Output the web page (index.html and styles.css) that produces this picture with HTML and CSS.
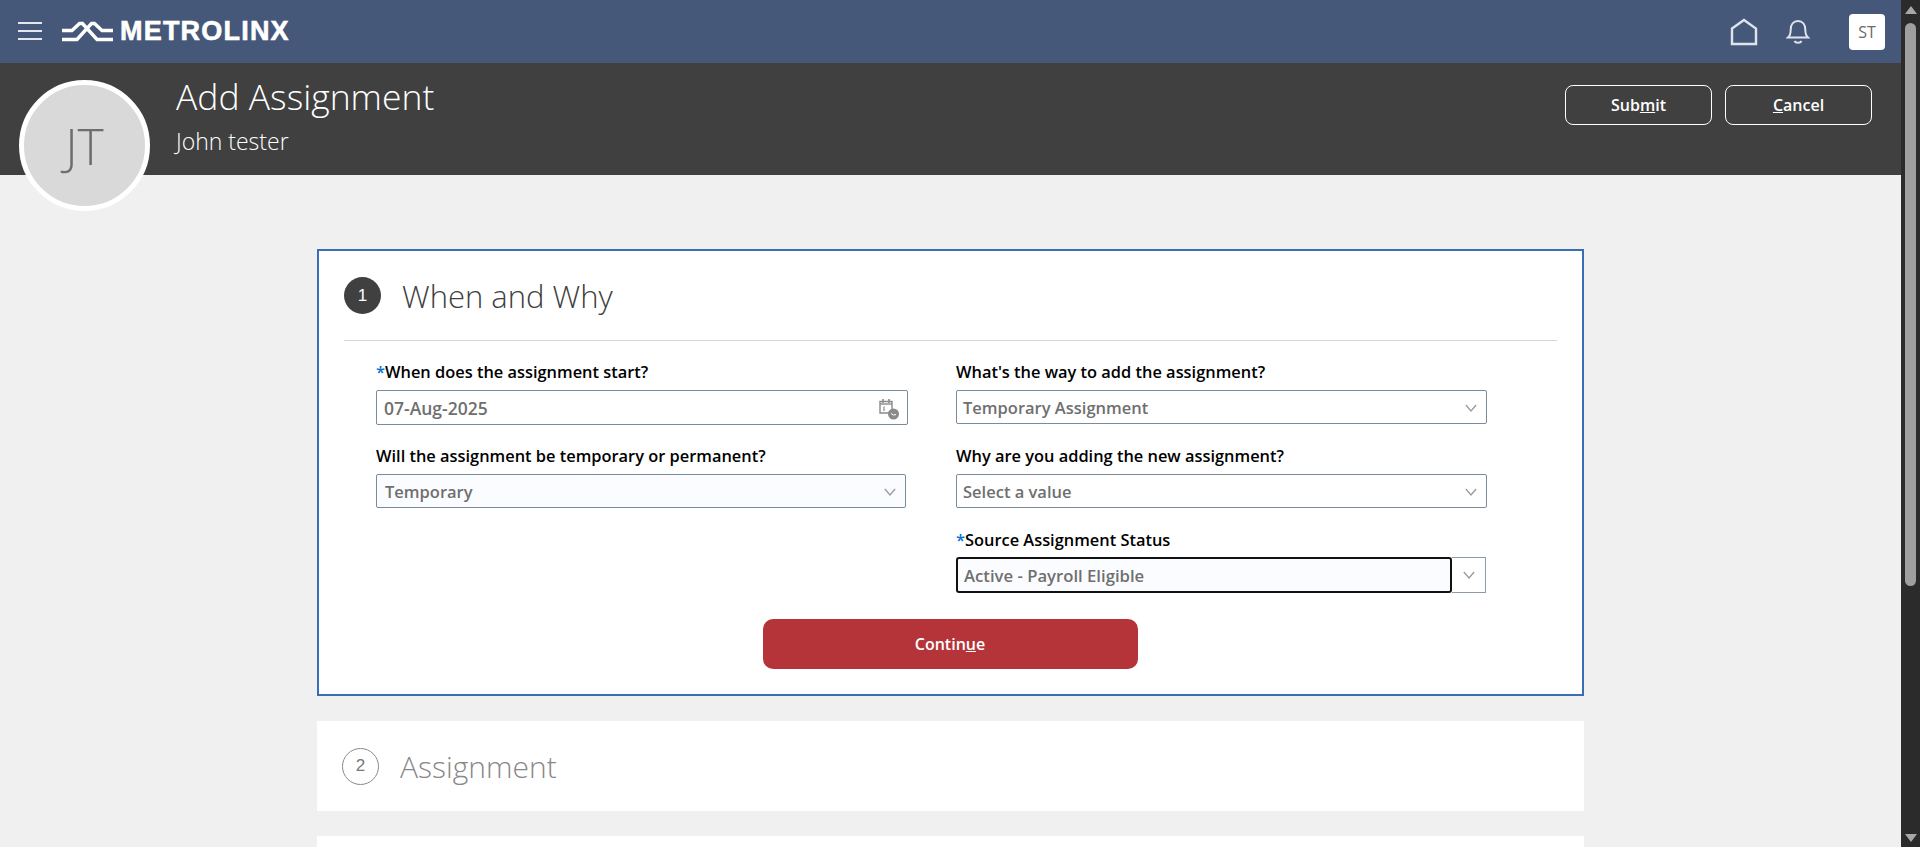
FILE: index.html
```html
<!DOCTYPE html>
<html lang="en">
<head>
    <meta charset="UTF-8">
    <title>Add Assignment</title>
    <link rel="stylesheet" href="styles.css">
</head>
<body>
    <div class="page">
        <header class="top-bar">
            <button class="menu-btn" aria-label="Menu"><span></span><span></span><span></span></button>
            <div class="logo">
                <svg class="logo-mark" width="51" height="22" viewBox="0 0 51 22" fill="none" stroke="#fff" stroke-width="3.4">
                    <path d="M0 9.5H10L17.5 2.5H20.5L35 18.5H51"/>
                    <path d="M0 18.5H15L29.5 2.5H32.5L40 9.5H51"/>
                </svg>
                <span class="logo-text">METROLINX</span>
            </div>
            <div class="top-icons">
                <svg class="home-icon" width="28" height="28" viewBox="0 0 28 28" fill="none" stroke="#dfe4ec" stroke-width="2.4">
                    <path d="M2 10.5L14 2L26 10.5V26H2Z"/>
                </svg>
                <svg class="bell-icon" width="24" height="26" viewBox="0 0 24 26" fill="none" stroke="#dfe4ec" stroke-width="2">
                    <path d="M2 18.5H22C19.5 16.5 19.3 14 19.3 10.5C19.3 5.5 16.5 2 12 2C7.5 2 4.7 5.5 4.7 10.5C4.7 14 4.5 16.5 2 18.5Z"/>
                    <path d="M8.5 22C9.5 24.4 14.5 24.4 15.5 22"/>
                </svg>
                <div class="user-badge">ST</div>
            </div>
        </header>

        <section class="title-band">
            <div class="avatar">JT</div>
            <div class="title-text">
                <h1>Add Assignment</h1>
                <p>John tester</p>
            </div>
            <div class="title-actions">
                <button class="outline-btn">Sub<u>m</u>it</button>
                <button class="outline-btn"><u>C</u>ancel</button>
            </div>
        </section>

        <main class="content">
            <section class="step-card active">
                <div class="step-head">
                    <span class="step-num">1</span>
                    <h2>When and Why</h2>
                </div>
                <div class="form-grid">
                    <div class="field">
                        <label><span class="req">*</span>When does the assignment start?</label>
                        <div class="input-box date-box">
                            <span>07-Aug-2025</span>
                            <svg width="22" height="22" viewBox="0 0 22 22" fill="none">
                                <path d="M2 3.5H14V15H2Z" stroke="#8a8a8a" stroke-width="1.4"/>
                                <path d="M5 1V5M11 1V5" stroke="#8a8a8a" stroke-width="1.6"/>
                                <path d="M2 6H14" stroke="#8a8a8a" stroke-width="1.4"/>
                                <path d="M6 8.5V13" stroke="#8a8a8a" stroke-width="1.2"/>
                                <circle cx="15.5" cy="16" r="5.5" fill="#8a8a8a"/>
                                <path d="M13 15.5L15.5 17L18 16.6" stroke="#fff" stroke-width="1"/>
                            </svg>
                        </div>
                    </div>
                    <div class="field">
                        <label>What's the way to add the assignment?</label>
                        <div class="input-box select-box">
                            <span>Temporary Assignment</span>
                            <svg class="chevron" width="12" height="8" viewBox="0 0 14 9" fill="none"><path d="M1 1L7 8L13 1"/></svg>
                        </div>
                    </div>
                    <div class="field narrow">
                        <label>Will the assignment be temporary or permanent?</label>
                        <div class="input-box select-box tinted">
                            <span>Temporary</span>
                            <svg class="chevron" width="12" height="8" viewBox="0 0 14 9" fill="none"><path d="M1 1L7 8L13 1"/></svg>
                        </div>
                    </div>
                    <div class="field">
                        <label>Why are you adding the new assignment?</label>
                        <div class="input-box select-box">
                            <span>Select a value</span>
                            <svg class="chevron" width="12" height="8" viewBox="0 0 14 9" fill="none"><path d="M1 1L7 8L13 1"/></svg>
                        </div>
                    </div>
                    <div class="field col-2">
                        <label><span class="req">*</span>Source Assignment Status</label>
                        <div class="combo">
                            <div class="combo-input">Active - Payroll Eligible</div>
                            <div class="combo-btn">
                                <svg class="chevron" width="12" height="8" viewBox="0 0 14 9" fill="none"><path d="M1 1L7 8L13 1"/></svg>
                            </div>
                        </div>
                    </div>
                </div>
                <div class="card-actions">
                    <button class="continue-btn">Contin<u>u</u>e</button>
                </div>
            </section>

            <section class="step-card collapsed">
                <span class="step-num">2</span>
                <h2>Assignment</h2>
            </section>

            <section class="step-card next"></section>
        </main>
    </div>

    <div class="scrollbar">
        <div class="arrow up"></div>
        <div class="thumb"></div>
        <div class="arrow down"></div>
    </div>
</body>
</html>
```
FILE: styles.css
```css
* {
    box-sizing: border-box;
}
html, body {
    margin: 0;
    height: 847px;
    overflow: hidden;
}
body {
    display: flex;
    background-color: #f0f0f0;
    font-family: "Open Sans", "Liberation Sans", sans-serif;
}
button {
    font-family: inherit;
    cursor: pointer;
}
.page {
    flex: 1;
    min-width: 0;
}

/* top bar */
.top-bar {
    display: flex;
    align-items: center;
    height: 63px;
    padding: 0 16px 0 18px;
    background-color: #46587a;
}
.menu-btn {
    display: flex;
    flex-direction: column;
    gap: 6px;
    width: 24px;
    margin-top: -2px;
    padding: 0;
    border: none;
    background: none;
}
.menu-btn span {
    height: 2px;
    background-color: #e4e8ee;
}
.logo {
    display: flex;
    align-items: center;
    gap: 7px;
    margin-left: 20px;
}
.logo-text {
    color: #fff;
    font-family: "Liberation Sans", sans-serif;
    font-size: 27px;
    font-weight: 700;
    letter-spacing: 1.2px;
    -webkit-text-stroke: 0.6px #fff;
}
.top-icons {
    display: flex;
    align-items: center;
    margin-left: auto;
}
.bell-icon {
    margin-left: 28px;
}
.user-badge {
    display: flex;
    align-items: center;
    justify-content: center;
    width: 36px;
    height: 36px;
    margin-left: 39px;
    border-radius: 4px;
    background-color: #fff;
    color: #6b6b6b;
    font-size: 16px;
}

/* title band */
.title-band {
    display: flex;
    height: 112px;
    padding: 17px 29px 0 19px;
    background-color: #404040;
}
.avatar {
    display: flex;
    flex: none;
    align-items: center;
    justify-content: center;
    width: 131px;
    height: 131px;
    border: 5px solid #fff;
    border-radius: 50%;
    background-color: #d9d9d9;
    color: #6e6e6e;
    font-size: 50px;
    font-weight: 300;
}
.title-text {
    margin-left: 26px;
    color: #fff;
}
.title-text h1 {
    margin: -7px 0 0;
    font-size: 35.5px;
    font-weight: 300;
    line-height: 46px;
}
.title-text p {
    margin: 7px 0 0;
    font-size: 23px;
    font-weight: 300;
    line-height: 30px;
}
.title-actions {
    display: flex;
    gap: 13px;
    margin-left: auto;
    padding-top: 5px;
}
.outline-btn {
    width: 147px;
    height: 40px;
    border: 1px solid #fff;
    border-radius: 8px;
    background: none;
    color: #fff;
    font-size: 16px;
    font-weight: 600;
}

/* steps */
.content {
    padding: 74px 317px 0 317px;
}
.step-card {
    margin-bottom: 25px;
    background-color: #fff;
}
.step-card.active {
    height: 447px;
    padding: 0 25px;
    border: 2px solid #3a6db5;
}
.step-head {
    display: flex;
    align-items: center;
    height: 90px;
    border-bottom: 1px solid #d6d6d6;
}
.step-num {
    display: flex;
    flex: none;
    align-items: center;
    justify-content: center;
    width: 37px;
    height: 37px;
    border-radius: 50%;
    background-color: #404040;
    color: #fff;
    font-family: "Liberation Sans", sans-serif;
    font-size: 17px;
}
h2 {
    margin: 0;
    color: #404040;
    font-size: 31px;
    font-weight: 300;
}
.step-head h2 {
    margin-left: 21px;
}
.step-card.collapsed {
    display: flex;
    align-items: center;
    height: 90px;
    padding-left: 25px;
}
.collapsed .step-num {
    border: 1px solid #8a8a8a;
    background: none;
    color: #777;
}
.collapsed h2 {
    margin-left: 21px;
    color: #888;
    font-size: 30px;
}
.step-card.next {
    height: 40px;
}

/* form */
.form-grid {
    display: grid;
    grid-template-columns: 532px 531px;
    column-gap: 48px;
    padding: 17px 0 0 32px;
}
.field {
    height: 84px;
}
.field.col-2 {
    grid-column: 2;
}
.field.narrow .input-box {
    width: 530px;
}
.field label {
    display: block;
    height: 32px;
    color: #000;
    font-size: 16.4px;
    font-weight: 600;
    line-height: 27px;
}
.req {
    color: #0572ce;
}
.input-box {
    display: flex;
    align-items: center;
    justify-content: space-between;
    height: 34px;
    padding: 1px 7px 0 6px;
    border: 1px solid #7a8b9b;
    border-radius: 2px;
    color: #6f6f6f;
    font-size: 16.5px;
    font-weight: 600;
}
.tinted {
    background-color: #fbfcff;
    padding-left: 8px;
}
.date-box {
    height: 35px;
    padding-left: 7px;
    font-size: 17.5px;
}
.date-box svg {
    margin-top: 2px;
}
.chevron {
    fill: none;
    stroke: #9a9a9a;
    stroke-width: 1.5;
}
.select-box .chevron {
    margin-right: 2px;
}
.combo {
    display: flex;
    height: 36px;
    margin-top: -1px;
}
.combo-input {
    display: flex;
    flex: none;
    align-items: center;
    width: 496px;
    padding-left: 6px;
    border: 2px solid #111;
    border-radius: 3px;
    background-color: #fbfcff;
    color: #6f6f6f;
    font-size: 16.7px;
    font-weight: 600;
}
.combo-btn {
    display: flex;
    align-items: center;
    justify-content: center;
    width: 34px;
    border: 1px solid #8e9aa6;
    border-left: none;
}
.card-actions {
    display: flex;
    justify-content: center;
    margin-top: 9px;
    padding-right: 1px;
}
.continue-btn {
    width: 375px;
    height: 50px;
    border: none;
    border-radius: 10px;
    background-color: #b5343a;
    color: #fff;
    font-size: 16px;
    font-weight: 600;
}

/* scrollbar */
.scrollbar {
    display: flex;
    flex: none;
    flex-direction: column;
    align-items: center;
    width: 19px;
    padding: 6px 0 5px;
    background-color: #2b2b2b;
}
.thumb {
    width: 11px;
    height: 563px;
    margin-top: 9px;
    border-radius: 6px;
    background-color: #9f9f9f;
}
.arrow {
    width: 0;
    height: 0;
    border-left: 6px solid transparent;
    border-right: 6px solid transparent;
}
.arrow.up {
    border-bottom: 8px solid #a8a8a8;
}
.arrow.down {
    margin-top: auto;
    border-top: 8px solid #a8a8a8;
}
```
